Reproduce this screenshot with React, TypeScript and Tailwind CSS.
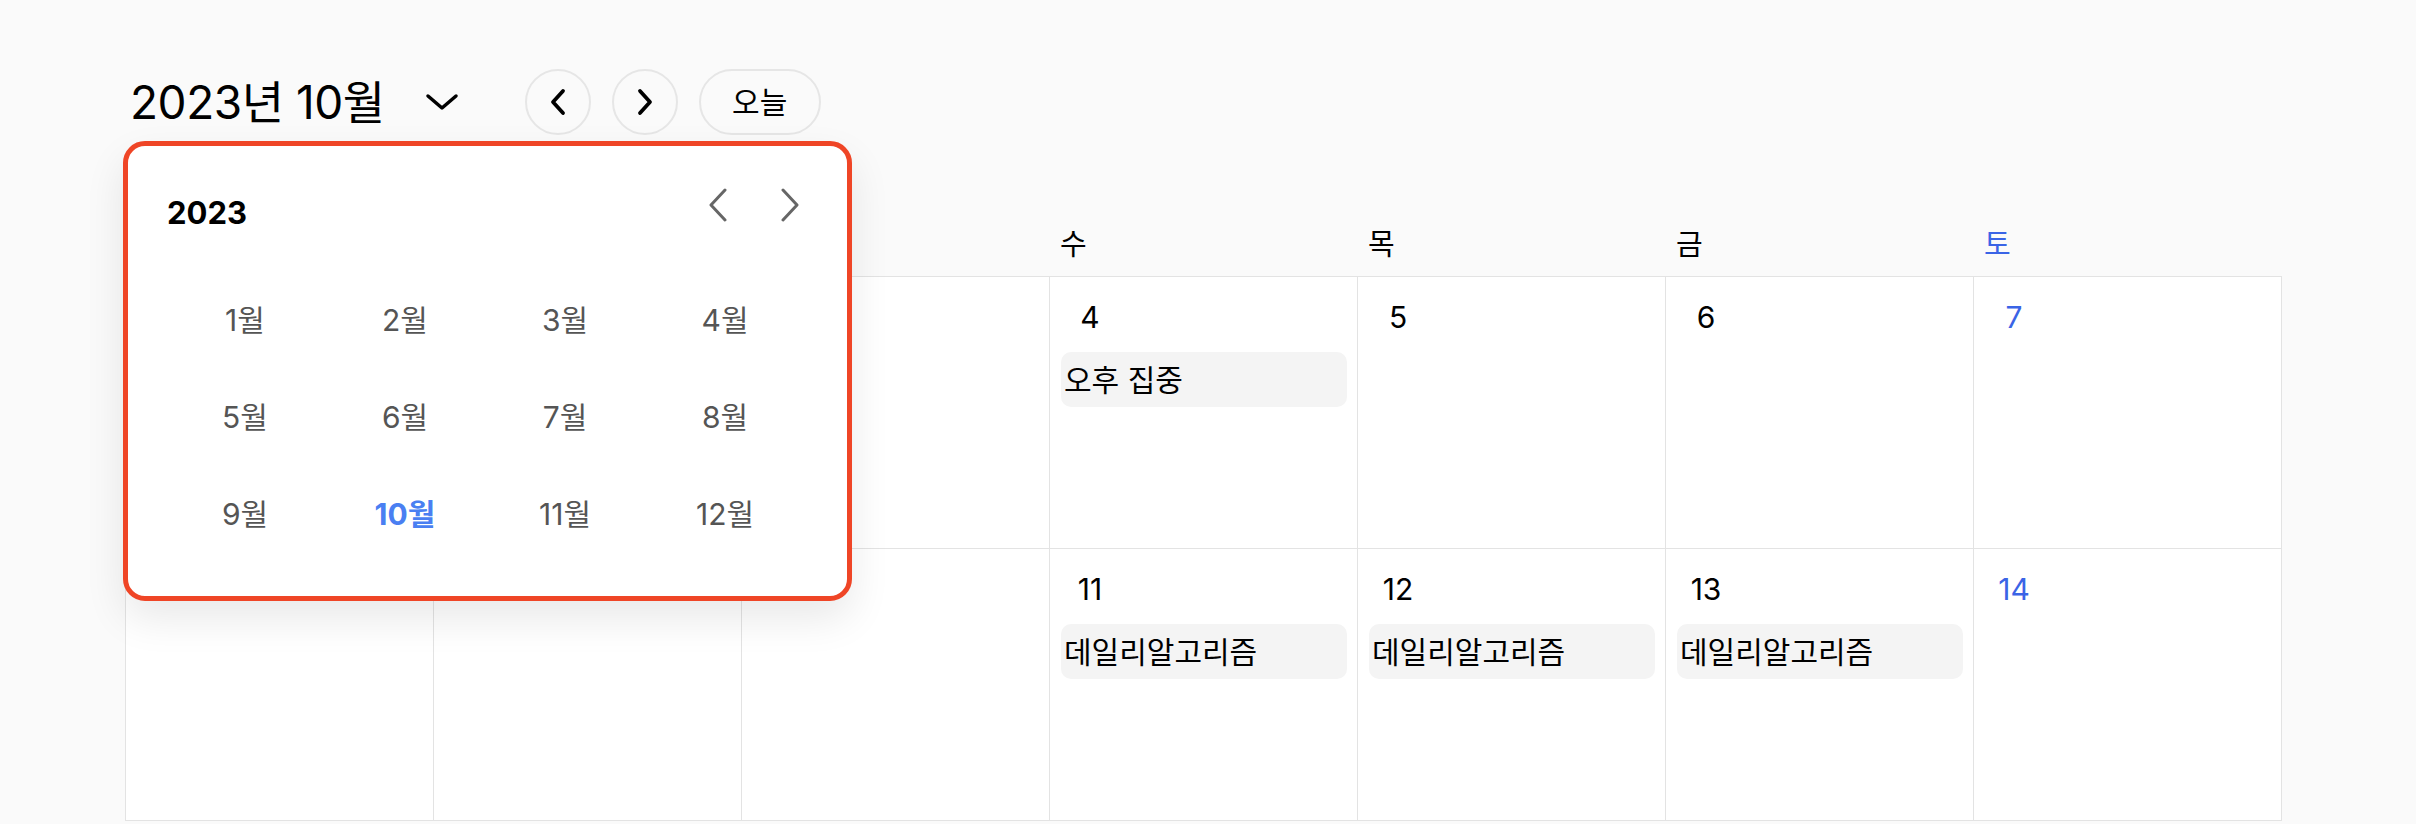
import React from 'react';

const weekdays = ['일', '월', '화', '수', '목', '금', '토'];

type Day = { date: number; events: string[] };

const weeks: Day[][] = [
  [
    { date: 1, events: [] },
    { date: 2, events: [] },
    { date: 3, events: [] },
    { date: 4, events: ['오후 집중'] },
    { date: 5, events: [] },
    { date: 6, events: [] },
    { date: 7, events: [] },
  ],
  [
    { date: 8, events: [] },
    { date: 9, events: [] },
    { date: 10, events: [] },
    { date: 11, events: ['데일리알고리즘'] },
    { date: 12, events: ['데일리알고리즘'] },
    { date: 13, events: ['데일리알고리즘'] },
    { date: 14, events: [] },
  ],
];

const months = Array.from({ length: 12 }, (_, i) => i + 1);

const MonthPicker = () => (
  <div className="absolute left-[-2px] top-[72px] z-20 w-[729px] h-[460px] rounded-[22px] border-[5px] border-[#ef4526] bg-white pl-[39px] pr-[37px] pt-[41px] shadow-[0_18px_40px_rgba(0,0,0,0.09)]">
    <div className="flex h-[50px] items-center justify-between">
      <span className="text-[31px] font-bold leading-none text-black">2023</span>
      <div className="mb-[15px] flex gap-[32px] text-[#666666]">
        <button className="flex h-[40px] w-[40px] items-center justify-center">
          <svg width="18" height="34" viewBox="0 0 18 34" fill="none">
            <polyline points="16,2 2,17 16,32" stroke="currentColor" strokeWidth="3" strokeLinecap="round" strokeLinejoin="round" />
          </svg>
        </button>
        <button className="flex h-[40px] w-[40px] items-center justify-center">
          <svg width="18" height="34" viewBox="0 0 18 34" fill="none">
            <polyline points="2,2 16,17 2,32" stroke="currentColor" strokeWidth="3" strokeLinecap="round" strokeLinejoin="round" />
          </svg>
        </button>
      </div>
    </div>
    <div className="ml-[-2px] mt-[34px] grid w-[640px] grid-cols-4">
      {months.map((m) => (
        <div
          key={m}
          className={`flex h-[97px] items-center justify-center text-[30px] leading-none ${
            m === 10 ? 'font-bold text-[#4a7ff2]' : 'text-[#555555]'
          }`}
        >
          {m}월
        </div>
      ))}
    </div>
  </div>
);

export default function App() {
  return (
    <div
      className="min-h-screen bg-[#fafafa] text-black"
      style={{ fontFamily: 'Inter, "Noto Sans CJK KR", sans-serif' }}
    >
      <div className="relative pl-[125px] pt-[69px]">
        {/* Toolbar */}
        <div className="relative flex h-[66px] items-center">
          <button className="ml-[5px] flex items-center">
            <span className="text-[46px] leading-none tracking-[-0.01em]">2023년 10월</span>
            <span className="ml-[40px] flex items-center">
              <svg width="34" height="18" viewBox="0 0 34 18" fill="none">
                <polyline points="3,3 17,15 31,3" stroke="currentColor" strokeWidth="3.5" strokeLinecap="round" strokeLinejoin="round" />
              </svg>
            </span>
          </button>
          <div className="ml-[66px] flex items-center gap-[21px]">
            <button className="flex h-[66px] w-[66px] items-center justify-center rounded-full border-2 border-[#e6e6e6]">
              <svg width="20" height="28" viewBox="0 0 20 28" fill="none">
                <polyline points="15,3 5,14 15,25" stroke="currentColor" strokeWidth="3.8" strokeLinecap="round" strokeLinejoin="round" />
              </svg>
            </button>
            <button className="flex h-[66px] w-[66px] items-center justify-center rounded-full border-2 border-[#e6e6e6]">
              <svg width="20" height="28" viewBox="0 0 20 28" fill="none">
                <polyline points="5,3 15,14 5,25" stroke="currentColor" strokeWidth="3.8" strokeLinecap="round" strokeLinejoin="round" />
              </svg>
            </button>
            <button className="flex h-[66px] w-[122px] items-center justify-center rounded-full border-2 border-[#e6e6e6] text-[30px] leading-none">
              오늘
            </button>
          </div>
          <MonthPicker />
        </div>

        {/* Weekday header */}
        <div className="mt-[78px] grid h-[63px] w-[2157px] grid-cols-7 pl-[1px]">
          {weekdays.map((d, i) => (
            <div
              key={d}
              className={`flex items-center pl-[10px] text-[29px] leading-none ${
                i === 6 ? 'text-[#3a64e6]' : i === 0 ? 'text-[#e5484d]' : 'text-black'
              }`}
            >
              {d}
            </div>
          ))}
        </div>

        {/* Month grid */}
        <div className="w-[2157px] border-l border-t border-[#e3e3e3] bg-white">
          {weeks.map((week, wi) => (
            <div key={wi} className="grid grid-cols-7">
              {week.map((day, di) => (
                <div key={day.date} className="h-[272px] border-b border-r border-[#e3e3e3] pl-[11px] pr-[10px] pt-[25px]">
                  <div
                    className={`ml-[5px] w-[48px] text-center text-[30px] leading-none ${
                      di === 6 ? 'text-[#3a64e6]' : di === 0 ? 'text-[#e5484d]' : 'text-black'
                    }`}
                  >
                    {day.date}
                  </div>
                  <div className="mt-[20px] flex flex-col gap-[6px]">
                    {day.events.map((ev) => (
                      <div key={ev} className="flex h-[55px] items-center rounded-[10px] bg-[#f4f4f4] pl-[3px] text-[30px] leading-none">
                        {ev}
                      </div>
                    ))}
                  </div>
                </div>
              ))}
            </div>
          ))}
        </div>
      </div>
    </div>
  );
}
